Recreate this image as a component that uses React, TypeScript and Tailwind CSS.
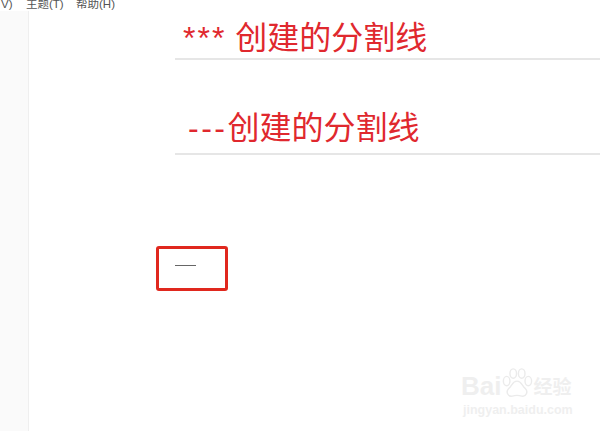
const font = { fontFamily: '"Liberation Sans", "Noto Sans CJK SC", sans-serif' };

function Watermark() {
  return (
    <div className="absolute left-[461px] top-[373px] w-[120px] text-[#efefef]">
      <div className="flex items-end">
        <span className="text-[26px] leading-[26px] font-bold">Bai</span>
        <svg viewBox="0 0 34 34" className="w-[32px] h-[32px] -mt-2" fill="none" stroke="#ebebeb" strokeWidth="1.5">
          <ellipse cx="6" cy="15" rx="3.5" ry="5" />
          <ellipse cx="13" cy="7" rx="3.5" ry="5" />
          <ellipse cx="22" cy="7" rx="3.5" ry="5" />
          <ellipse cx="29" cy="15" rx="3.5" ry="5" />
          <path d="M17 15c-5 0-5 5-9 8-3 3-1 9 4 8 3-1 7-1 10 0 5 1 7-5 4-8-4-3-4-8-9-8z" />
        </svg>
        <span className="text-[19px] leading-[22px] font-bold">经验</span>
      </div>
      <div className="text-[12.5px] leading-[14px] mt-[4px] ml-[2px] font-bold">jingyan.baidu.com</div>
    </div>
  );
}

export default function App() {
  return (
    <div className="relative h-[431px] w-[600px] overflow-hidden bg-white" style={font}>
      <div className="flex h-[11px] overflow-hidden text-[11.5px] leading-[14px] text-[#555]">
        <div className="-mt-[3px] flex">
          <span className="w-[26px] pl-[1px]">V)</span>
          <span className="w-[50px]">主题(T)</span>
          <span>帮助(H)</span>
        </div>
      </div>
      <div className="flex h-[420px]">
        <div className="w-[29px] shrink-0 border-r border-[#efefef] bg-[#fafafa]" />
        <div className="flex-1 pt-[7px]">
          <div className="ml-[146px]">
            <div className="border-b-2 border-[#e6e6e6]">
              <h2 className="pl-[8px] text-[32px] leading-[40px] font-normal text-[#e0282e]">
                <span className="tracking-[2px]">***</span> 创建的分割线
              </h2>
            </div>
            <div className="mt-[48px] border-b-2 border-[#e6e6e6] pb-[5px]">
              <h2 className="pl-[13px] text-[32px] leading-[40px] font-normal text-[#e0282e]">
                <span className="tracking-[2.5px]">---</span>创建的分割线
              </h2>
            </div>
          </div>
          <div className="ml-[127px] mt-[91px] h-[45px] w-[72px] rounded-[3px] border-[3px] border-[#e0281e] pl-[16px] pt-[16px]">
            <div className="h-px w-[21px] bg-[#666]" />
          </div>
        </div>
      </div>
      <Watermark />
    </div>
  );
}
